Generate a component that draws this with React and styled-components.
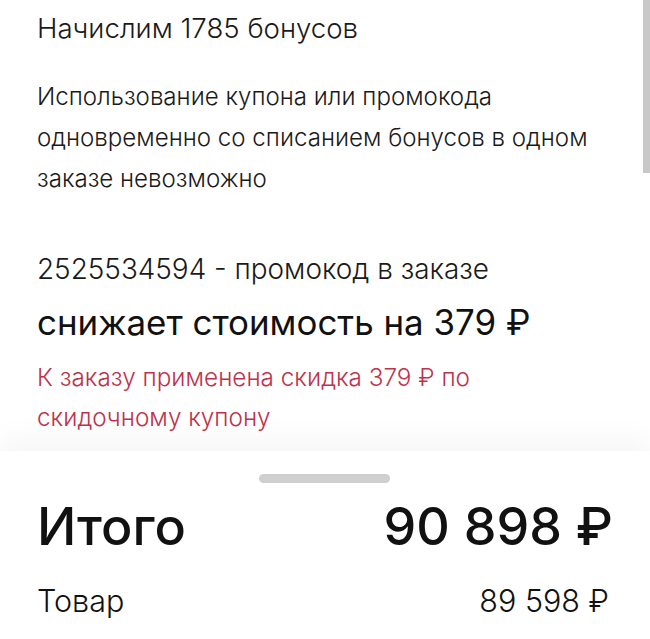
import React from "react";
import styled, { createGlobalStyle } from "styled-components";

const Global = createGlobalStyle`
  html, body { margin: 0; padding: 0; background: #fff; }
  body { font-family: Inter, Roboto, "Noto Sans", Arial, sans-serif; color: #1a1a1a; }
`;

const Page = styled.div`
  position: relative;
  width: 650px;
  height: 639px;
  overflow: hidden;
  display: flex;
  flex-direction: column;
  background: #fff;
`;

const Content = styled.div`
  flex: 1;
  padding: 8px 37px 0;
  display: flex;
  flex-direction: column;
`;

const Scrollbar = styled.div`
  position: absolute;
  top: 0;
  right: 0;
  width: 7px;
  height: 173px;
  background: #c8c8c8;
`;

const Line = styled.div`
  font-size: ${(p) => p.$size}px;
  line-height: ${(p) => p.$lh}px;
  font-weight: ${(p) => p.$weight || 300};
  color: ${(p) => p.$color || "#1a1a1a"};
  margin-top: ${(p) => p.$mt || 0}px;
  white-space: nowrap;
`;

const Sheet = styled.div`
  height: 188px;
  flex-shrink: 0;
  background: #fff;
  box-shadow: 0 -14px 26px rgba(0, 0, 0, 0.035);
  display: flex;
  flex-direction: column;
  align-items: stretch;
  padding: 23px 37px 0 37px;
  box-sizing: border-box;
  position: relative;
`;

const Handle = styled.div`
  align-self: center;
  width: 131px;
  height: 9px;
  border-radius: 5px;
  background: #cfcfcf;
  margin-left: -1px;
`;

const Row = styled.div`
  display: flex;
  justify-content: space-between;
  align-items: center;
  margin-top: ${(p) => p.$mt}px;
  padding-right: ${(p) => p.$pr || 0}px;
  font-size: ${(p) => p.$size}px;
  line-height: ${(p) => p.$lh}px;
  font-weight: ${(p) => p.$weight};
  color: #111;
`;

export default function App() {
  return (
    <>
      <Global />
      <Page>
        <Scrollbar />
        <Content>
          <Line $size={27.6} $lh={40}>Начислим 1785 бонусов</Line>
          <Line $size={24.1} $lh={41} $mt={28}>
            Использование купона или промокода
            <br />
            одновременно со списанием бонусов в одном
            <br />
            заказе невозможно
          </Line>
          <Line $size={27.9} $lh={40} $mt={50}>2525534594 - промокод в заказе</Line>
          <Line $size={34.9} $lh={50} $mt={8} $weight={400} $color="#111">
            снижает стоимость на 379 ₽
          </Line>
          <Line $size={24.3} $lh={40} $mt={10} $color="#c0324b">
            К заказу применена скидка 379 ₽ по
            <br />
            скидочному купону
          </Line>
        </Content>
        <Sheet>
          <Handle />
          <Row $mt={14} $size={52} $lh={60} $weight={500}>
            <span>Итого</span>
            <span>90 898 ₽</span>
          </Row>
          <Row $mt={24} $size={30.5} $lh={40} $weight={300} $pr={4}>
            <span>Товар</span>
            <span>89 598 ₽</span>
          </Row>
        </Sheet>
      </Page>
    </>
  );
}
